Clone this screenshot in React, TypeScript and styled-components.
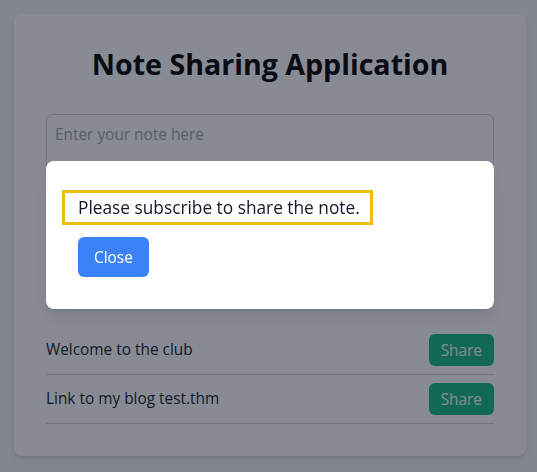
import React from "react";
import styled, { createGlobalStyle } from "styled-components";

const Global = createGlobalStyle`
  html, body { margin: 0; padding: 0; overflow: hidden; }
  body {
    background: #f3f4f6;
    font-family: "Open Sans", "Noto Sans", sans-serif;
    color: #1f2937;
  }
  * { box-sizing: border-box; }
`;

const Page = styled.div`
  width: 540px;
  min-height: 472px;
  padding-top: 14px;
  display: flex;
  justify-content: center;
  align-items: flex-start;
`;

const Card = styled.div`
  width: 512px;
  background: #ffffff;
  border-radius: 8px;
  box-shadow: 0 4px 6px -1px rgba(0,0,0,0.1), 0 2px 4px -2px rgba(0,0,0,0.1);
  padding: 32px;
`;

const Title = styled.h1`
  margin: 0 0 32px;
  font-size: 28.6px;
  line-height: 36px;
  font-weight: 700;
  text-align: center;
  color: #000;
`;

const NoteInput = styled.textarea`
  display: block;
  width: 100%;
  height: 114px;
  padding: 8px;
  border: 1px solid #d1d5db;
  border-radius: 6px;
  font-family: inherit;
  font-size: 15.4px;
  line-height: 24px;
  resize: none;
  &::placeholder { color: #9ca3af; }
`;

const List = styled.ul`
  list-style: none;
  margin: 98px 0 0;
  padding: 0;
`;

const Item = styled.li`
  display: flex;
  align-items: center;
  justify-content: space-between;
  padding: 8px 0;
  border-bottom: 1px solid #d1d5db;
  font-size: 15.4px;
  line-height: 24px;
  color: #111827;
`;

const ShareButton = styled.button`
  height: 32px;
  padding: 0 12px;
  border: none;
  border-radius: 6px;
  background: #10b981;
  color: #fff;
  font-family: inherit;
  font-size: 15.4px;
`;

const Overlay = styled.div`
  position: fixed;
  inset: 0;
  width: 540px;
  padding-bottom: 2px;
  background: rgba(17, 24, 39, 0.5);
  display: flex;
  align-items: center;
  justify-content: center;
`;

const Modal = styled.div`
  width: 448px;
  background: #fff;
  border-radius: 8px;
  padding: 32px;
  box-shadow: 0 10px 15px -3px rgba(0,0,0,0.1), 0 4px 6px -4px rgba(0,0,0,0.1);
`;

const Message = styled.p`
  margin: 0 0 15px;
  font-size: 17.3px;
  line-height: 28px;
  color: #111827;
`;

const Highlight = styled.span`
  display: inline-block;
  vertical-align: top;
  height: 29px;
  line-height: 29px;
  outline: 3px solid #ecbd12;
  outline-offset: 0;
  padding: 0 10px 0 13px;
  margin-left: -13px;
`;

const CloseButton = styled.button`
  display: block;
  height: 40px;
  padding: 0 16px;
  border: none;
  border-radius: 6px;
  background: #3b82f6;
  color: #fff;
  font-family: inherit;
  font-size: 15.4px;
`;

const notes = ["Welcome to the club", "Link to my blog test.thm"];

export default function App() {
  return (
    <>
      <Global />
      <Page>
        <Card>
          <Title>Note Sharing Application</Title>
          <NoteInput placeholder="Enter your note here" />
          <List>
            {notes.map((n) => (
              <Item key={n}>
                <span>{n}</span>
                <ShareButton>Share</ShareButton>
              </Item>
            ))}
          </List>
        </Card>
      </Page>
      <Overlay>
        <Modal>
          <Message>
            <Highlight>Please subscribe to share the note.</Highlight>
          </Message>
          <CloseButton>Close</CloseButton>
        </Modal>
      </Overlay>
    </>
  );
}
